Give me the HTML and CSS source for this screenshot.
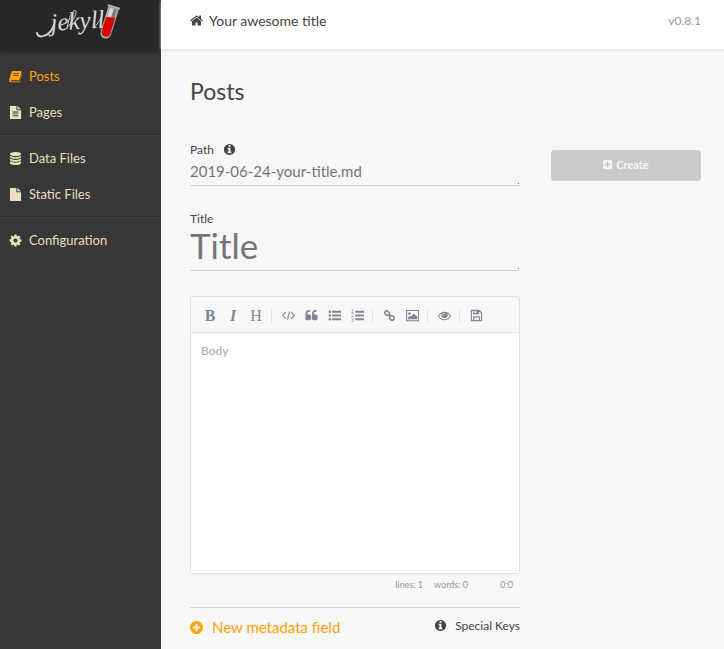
FILE: index.html
```html
<!DOCTYPE html>
<html lang="en">
<head>
<meta charset="utf-8">
<meta name="viewport" content="width=device-width, initial-scale=1">
<title>Posts - Your awesome title</title>
<link rel="stylesheet" href="styles.css">
</head>
<body>
<div class="app">
  <aside class="sidebar">
    <a class="logo" href="#" aria-label="Jekyll home">
      <svg width="84" height="44" viewBox="0 0 84 44">
        <path class="swash" d="M1 30c1 5 8 4 12 0 2-2 4-5 5-8"/>
        <path class="swash thin" d="M31 25c4-5 10-13 9-17-2-3-7 5-9 17M58 25c4-5 9-11 8-15M64 25c4-2 6-6 7-9"/>
        <text class="wordmark" transform="rotate(-4 15 28)" x="15" y="28">jekyll</text>
        <g transform="rotate(17 73 18)">
          <path fill="#aaa" d="M68 3h11v26q0 7-5.500 7t-5.500-7z"/>
          <path fill="#777" d="M70 5h7v10h-7z"/>
          <path fill="#d8d8d8" d="M70 5h4v10h-4z"/>
          <path fill="#d90000" d="M69 15l9-2v16q0 5-4.500 5t-4.500-5z"/>
          <path fill="#aaa" d="M67 2h13v2h-13z"/>
        </g>
      </svg>
    </a>
    <nav class="nav">
      <ul class="group">
        <li><a class="active" href="#"><svg class="icon" viewBox="0 0 14 14"><path fill="currentColor" fill-rule="evenodd" d="M4 1h8.500q1.500 0 1 1.600L11.300 10q-.4 1-1.300 1H2.600q-.9 0-.8.700.1.600.9.600h7.700q.9 0 1.300-1L13.800 4q.5.500.2 1.300L11.900 12q-.4 1.300-1.700 1.300H2.500Q.4 13.300.1 11.300q0-.8.400-1.600L2.800 2.200Q3.200 1 4 1zM5 3.500l-.3.900h6l.3-.9zM4.300 5.600l-.3.900h6l.3-.9z"/></svg>Posts</a></li>
        <li><a href="#"><svg class="icon" viewBox="0 0 14 14"><path fill="currentColor" fill-rule="evenodd" d="M1 0h7v4.500h5V14H1zM9 0l4 3.500H9zM4 6v1h6V6zm0 2v1h6V8zm0 2v1h6v-1z"/></svg>Pages</a></li>
      </ul>
      <ul class="group">
        <li><a href="#"><svg class="icon" viewBox="0 0 14 14"><g fill="currentColor"><ellipse cx="7" cy="2.200" rx="6" ry="2.200"/><path d="M1 4q2 1.600 6 1.600T13 4v1.500Q12 7.400 7 7.400T1 5.500zM1 7q2 1.600 6 1.600T13 7v1.500q-1 1.900-6 1.900T1 8.500zM1 10q2 1.600 6 1.600t6-1.600v1.800Q12 14 7 14t-6-2.200z"/></g></svg>Data Files</a></li>
        <li><a href="#"><svg class="icon" viewBox="0 0 14 14"><path fill="currentColor" d="M1 0h7v4.500h5V14H1zM9 0l4 3.500H9z"/></svg>Static Files</a></li>
      </ul>
      <ul class="group">
        <li><a href="#"><svg class="icon" viewBox="64 64 1664 1664"><path fill="currentColor" d="M1152 896q0-106-75-181t-181-75-181 75-75 181 75 181 181 75 181-75 75-181zm512-109v222q0 12-8 23t-20 13l-185 28q-19 54-39 91 35 50 107 138 10 12 10 25t-9 23q-27 37-99 108t-94 71q-12 0-26-9l-138-108q-44 23-91 38-16 136-29 186-7 28-36 28h-222q-14 0-24.500-8.500t-11.500-21.500l-28-184q-49-16-90-37l-141 107q-10 9-25 9-14 0-25-11-126-114-165-168-7-10-7-23 0-12 8-23 15-21 51-66.500t54-70.500q-27-50-41-99l-183-27q-13-2-21-12.500t-8-23.500v-222q0-12 8-23t19-13l186-28q14-46 39-92-40-57-107-138-10-12-10-24 0-10 9-23 26-36 98.500-107.500t94.500-71.500q13 0 26 10l138 107q44-23 91-38 16-136 29-186 7-28 36-28h222q14 0 24.500 8.500t11.500 21.500l28 184q49 16 90 37l142-107q9-9 24-9 13 0 25 10 129 119 165 170 7 8 7 22 0 12-8 23-15 21-51 66.500t-54 70.500q26 50 41 98l183 28q13 2 21 12.500t8 23.500z"/></svg>Configuration</a></li>
      </ul>
    </nav>
  </aside>

  <div class="page">
    <header class="topbar">
      <a class="site" href="#"><svg class="icon" viewBox="64 64 1664 1664"><path fill="currentColor" d="M1472 992v480q0 26-19 45t-45 19h-384v-384h-256v384h-384q-26 0-45-19t-19-45v-480q0-1 .5-3t.5-3l575-474 575 474q1 2 1 6zm223-69l-62 74q-8 9-21 11h-3q-13 0-21-7l-692-577-692 577q-12 8-24 7-13-2-21-11l-62-74q-8-10-7-23.500t11-21.500l719-599q32-26 76-26t76 26l244 204v-195q0-14 9-23t23-9h192q14 0 23 9t9 23v408l219 182q10 8 11 21.500t-7 23.500z"/></svg>Your awesome title</a>
      <span class="version">v0.8.1</span>
    </header>

    <main class="content">
      <h1>Posts</h1>
      <form class="columns">
        <div class="fields">
          <div class="field">
            <label for="path">Path <svg class="info" viewBox="0 0 1792 1792"><path fill="currentColor" d="M1152 1376v-160q0-14-9-23t-23-9h-96v-512q0-14-9-23t-23-9h-320q-14 0-23 9t-9 23v160q0 14 9 23t23 9h96v320h-96q-14 0-23 9t-9 23v160q0 14 9 23t23 9h448q14 0 23-9t9-23zm-128-896v-160q0-14-9-23t-23-9h-192q-14 0-23 9t-9 23v160q0 14 9 23t23 9h192q14 0 23-9t9-23zm640 416q0 209-103 385.500t-279.500 279.500-385.500 103-385.500-103-279.500-279.500-103-385.500 103-385.500 279.500-279.500 385.500-103 385.500 103 279.500 279.500 103 385.500z"/></svg></label>
            <textarea id="path" class="line-input path-input" rows="1" placeholder="2019-06-24-your-title.md"></textarea>
          </div>
          <div class="field">
            <label for="title">Title</label>
            <textarea id="title" class="line-input title-input" rows="1" placeholder="Title"></textarea>
          </div>

          <div class="editor">
            <div class="toolbar" role="toolbar" aria-label="Formatting">
              <button type="button" class="tool bold" aria-label="Bold">B</button>
              <button type="button" class="tool italic" aria-label="Italic">I</button>
              <button type="button" class="tool" aria-label="Heading">H</button>
              <i class="separator"></i>
              <button type="button" class="tool" aria-label="Code"><svg viewBox="0 0 14 14"><path class="stroke" d="M4 3.500L.7 7 4 10.500M10 3.500L13.300 7 10 10.500M8.200 2.500l-2.400 9"/></svg></button>
              <button type="button" class="tool" aria-label="Quote"><svg viewBox="0 0 1792 1792"><path fill="currentColor" d="M832 960v384q0 80-56 136t-136 56h-384q-80 0-136-56t-56-136v-704q0-104 40.500-198.500t109.500-163.500 163.500-109.500 198.500-40.500h64q26 0 45 19t19 45v128q0 26-19 45t-45 19h-64q-106 0-181 75t-75 181v32q0 40 28 68t68 28h224q80 0 136 56t56 136zm896 0v384q0 80-56 136t-136 56h-384q-80 0-136-56t-56-136v-704q0-104 40.500-198.500t109.500-163.500 163.500-109.500 198.500-40.500h64q26 0 45 19t19 45v128q0 26-19 45t-45 19h-64q-106 0-181 75t-75 181v32q0 40 28 68t68 28h224q80 0 136 56t56 136z"/></svg></button>
              <button type="button" class="tool" aria-label="Bulleted list"><svg viewBox="0 0 14 14"><g fill="currentColor"><circle cx="2" cy="3" r="1.400"/><circle cx="2" cy="7" r="1.400"/><circle cx="2" cy="11" r="1.400"/><path d="M4.500 2H14v2H4.500zM4.500 6H14v2H4.500zM4.500 10H14v2H4.500z"/></g></svg></button>
              <button type="button" class="tool" aria-label="Numbered list"><svg viewBox="0 0 14 14"><g fill="currentColor"><path d="M4.500 2H14v2H4.500zM4.500 6H14v2H4.500zM4.500 10H14v2H4.500z"/><text class="digit" x="0" y="4">1</text><text class="digit" x="0" y="9">2</text><text class="digit" x="0" y="14">3</text></g></svg></button>
              <i class="separator"></i>
              <button type="button" class="tool" aria-label="Link"><svg viewBox="0 0 14 14"><g fill="none" stroke="currentColor" stroke-width="1.600"><rect x="1.800" y="2.300" width="5" height="4.200" rx="2" transform="rotate(45 4.300 4.400)"/><rect x="7.200" y="7.500" width="5" height="4.200" rx="2" transform="rotate(45 9.700 9.600)"/><path d="M5.500 5.500l3 3"/></g></svg></button>
              <button type="button" class="tool" aria-label="Image"><svg viewBox="0 0 14 14"><path class="stroke" d="M.6 1.600h12.800v11H.6z"/><circle cx="3.700" cy="4.800" r="1.300" fill="currentColor"/><path fill="currentColor" d="M2 11V9.300l2-2 1.200 1.100L8.500 5 12 8.300V11z"/></svg></button>
              <i class="separator"></i>
              <button type="button" class="tool" aria-label="Preview"><svg viewBox="0 0 1792 1792"><path fill="currentColor" d="M1664 960q-152-236-381-353 61 104 61 225 0 185-131.500 316.500t-316.500 131.500-316.500-131.500-131.500-316.500q0-121 61-225-229 117-381 353 133 205 333.500 326.500t434.500 121.500 434.500-121.500 333.500-326.500zm-720-384q0-20-14-34t-34-14q-125 0-214.500 89.500t-89.500 214.500q0 20 14 34t34 14 34-14 14-34q0-86 61-147t147-61q20 0 34-14t14-34zm848 384q0 34-20 69-140 230-376.500 368.500t-499.500 138.500-499.500-139-376.500-368q-20-35-20-69t20-69q140-229 376.500-368t499.500-139 499.500 139 376.500 368q20 35 20 69z"/></svg></button>
              <i class="separator"></i>
              <button type="button" class="tool" aria-label="Save"><svg viewBox="0 0 14 14"><path class="stroke" d="M1.500 1.500h8.200l2.800 2.800v8.200h-11zM4 12.500V8.500h6v4M4 1.500v3.500h5V1.500"/><path fill="currentColor" d="M6.800 1.500H9V5H6.800z"/></svg></button>
            </div>
            <textarea class="body-input" aria-label="Body" placeholder="Body"></textarea>
          </div>
          <div class="status"><span>lines: 1</span><span>words: 0</span><span class="cursor">0:0</span></div>

          <div class="meta">
            <a class="new-field" href="#"><svg viewBox="128 128 1536 1536"><path fill="currentColor" d="M1344 960v-128q0-26-19-45t-45-19h-256v-256q0-26-19-45t-45-19h-128q-26 0-45 19t-19 45v256h-256q-26 0-45 19t-19 45v128q0 26 19 45t45 19h256v256q0 26 19 45t45 19h128q26 0 45-19t19-45v-256h256q26 0 45-19t19-45zm320-64q0 209-103 385.500t-279.500 279.500-385.500 103-385.500-103-279.500-279.500-103-385.500 103-385.500 279.500-279.500 385.500-103 385.500 103 279.500 279.500 103 385.500z"/></svg>New metadata field</a>
            <a class="keys" href="#"><svg class="info" viewBox="0 0 1792 1792"><path fill="currentColor" d="M1152 1376v-160q0-14-9-23t-23-9h-96v-512q0-14-9-23t-23-9h-320q-14 0-23 9t-9 23v160q0 14 9 23t23 9h96v320h-96q-14 0-23 9t-9 23v160q0 14 9 23t23 9h448q14 0 23-9t9-23zm-128-896v-160q0-14-9-23t-23-9h-192q-14 0-23 9t-9 23v160q0 14 9 23t23 9h192q14 0 23-9t9-23zm640 416q0 209-103 385.500t-279.500 279.500-385.500 103-385.500-103-279.500-279.500-103-385.500 103-385.500 279.500-279.500 385.500-103 385.500 103 279.500 279.500 103 385.500z"/></svg>Special Keys</a>
          </div>
        </div>
        <div class="actions">
          <button type="button" class="create" disabled><svg viewBox="128 128 1536 1536"><path fill="currentColor" d="M1408 960v-128q0-26-19-45t-45-19h-320v-320q0-26-19-45t-45-19h-128q-26 0-45 19t-19 45v320h-320q-26 0-45 19t-19 45v128q0 26 19 45t45 19h320v320q0 26 19 45t45 19h128q26 0 45-19t19-45v-320h320q26 0 45-19t19-45zm256-544v960q0 119-84.500 203.500t-203.500 84.500h-960q-119 0-203.500-84.500t-84.500-203.500v-960q0-119 84.500-203.500t203.500-84.500h960q119 0 203.500 84.500t84.500 203.500z"/></svg>Create</button>
        </div>
      </form>
    </main>
  </div>
</div>
</body>
</html>
```
FILE: styles.css
```css
* { box-sizing: border-box; }

body {
  margin: 0;
  background: #f7f7f7;
  color: #444;
  font-family: Lato, "Liberation Sans", sans-serif;
  font-size: 12px;
}

a { color: inherit; text-decoration: none; }
svg { display: block; flex: none; }

.app { display: flex; min-height: 100vh; }

/* Sidebar */
.sidebar { flex: 0 0 161px; overflow: hidden; background: #373737; color: #ecdfbd; }
.logo {
  display: flex;
  justify-content: center;
  height: 51px;
  padding-top: 3px;
  padding-right: 6px;
  background: #272727;
  box-shadow: 0 1px 3px #222;
}
.wordmark {
  font: italic 25px "Liberation Serif", serif;
  fill: #d8d8d8;
}
.swash { fill: none; stroke: #d0d0d0; stroke-width: 2; stroke-linecap: round; }
.thin { stroke-width: 1; }

.nav ul { margin: 0; padding: 5px 0 4px; list-style: none; }
.nav .group:first-child { padding-top: 7px; }
.nav .group + .group { border-top: 1px solid #2b2b2b; box-shadow: inset 0 1px #424242; }
.nav a {
  display: flex;
  align-items: center;
  gap: 7px;
  height: 36px;
  padding-left: 9px;
  font-size: 13px;
}
.nav .active { color: #ffa108; }
.icon { width: 13px; height: 13px; }

/* Page header */
.page { flex: 1; min-width: 0; }
.topbar {
  display: flex;
  justify-content: space-between;
  align-items: center;
  height: 49px;
  padding: 0 23px 8px 29px;
  background: #fff;
  box-shadow: 0 1px 3px #ddd;
}
.site { display: flex; align-items: center; gap: 6px; font-size: 14px; }
.version { color: #999; }

/* Content */
.content { padding: 28px 23px 0 29px; }
h1 { margin: 0; font-size: 23px; font-weight: 400; line-height: 28px; }
.columns {
  display: grid;
  grid-template-columns: 11fr 5fr;
  gap: 31px;
  margin-top: 36px;
}
.fields { min-width: 0; }
.field { margin-bottom: 24px; }
.field label { display: flex; align-items: center; gap: 9px; height: 16px; }
.info { width: 13px; height: 13px; }

textarea {
  display: block;
  width: 100%;
  border: 0;
  outline: 0;
  background: transparent;
  color: #444;
  font-family: inherit;
  resize: none;
}
.line-input {
  padding: 0;
  border-bottom: 1px solid #d2d2d2;
  background: linear-gradient(#777, #777) right 1px bottom 1px / 1px 1px no-repeat;
  overflow: hidden;
}
.line-input::placeholder { color: #757575; opacity: 1; }
.path-input { height: 29px; font-size: 15px; line-height: 28px; }
.title-input { height: 45px; font-size: 35px; line-height: 38px; }

.editor { margin-top: 25px; border: 1px solid #e0e0e0; border-radius: 3px; }
.toolbar {
  display: flex;
  align-items: center;
  gap: 3px;
  height: 36px;
  padding: 2px 9px 0;
  border-bottom: 1px solid #e7e7e7;
}
.tool {
  display: flex;
  align-items: center;
  justify-content: center;
  width: 20px;
  height: 24px;
  padding: 0;
  border: 0;
  background: none;
  color: #7f8694;
  font: 16px "Liberation Serif", serif;
}
.tool svg { width: 13px; height: 13px; }
.bold { font-weight: 700; }
.italic { font-style: italic; font-weight: 700; }
.separator { width: 1px; height: 14px; margin: 0 3px 0 2px; background: #e1e1e1; }
.stroke { fill: none; stroke: currentColor; stroke-width: 1.2; }
.digit { font: 5px "Liberation Sans", sans-serif; }
.body-input {
  height: 240px;
  padding: 10px;
  background: #fff;
  font-size: 12px;
  line-height: 16px;
}
.body-input::placeholder { color: #aaa; opacity: 1; }

.status {
  display: flex;
  justify-content: flex-end;
  gap: 11px;
  padding: 5px 7px 0;
  color: #959694;
  font-size: 9px;
  line-height: 12px;
}
.cursor { min-width: 34px; text-align: right; }

.meta {
  display: flex;
  justify-content: space-between;
  margin-top: 16px;
  padding-top: 8px;
  border-top: 1px solid #d2d2d2;
}
.new-field {
  display: flex;
  align-items: center;
  gap: 9px;
  height: 22px;
  color: #ffa108;
  font-size: 15px;
}
.new-field svg { width: 13px; height: 13px; }
.keys { display: flex; align-items: center; gap: 8px; height: 18px; }

.create {
  display: flex;
  align-items: center;
  justify-content: center;
  gap: 4px;
  width: 100%;
  height: 31px;
  margin-top: 9px;
  padding: 0 0 3px;
  border: 1px solid #d0d0d0;
  border-radius: 3px;
  background: #c9cacc;
  color: #f5f5f5;
  font: bold 11px Lato, "Liberation Sans", sans-serif;
}
.create svg { width: 9px; height: 9px; }
```
